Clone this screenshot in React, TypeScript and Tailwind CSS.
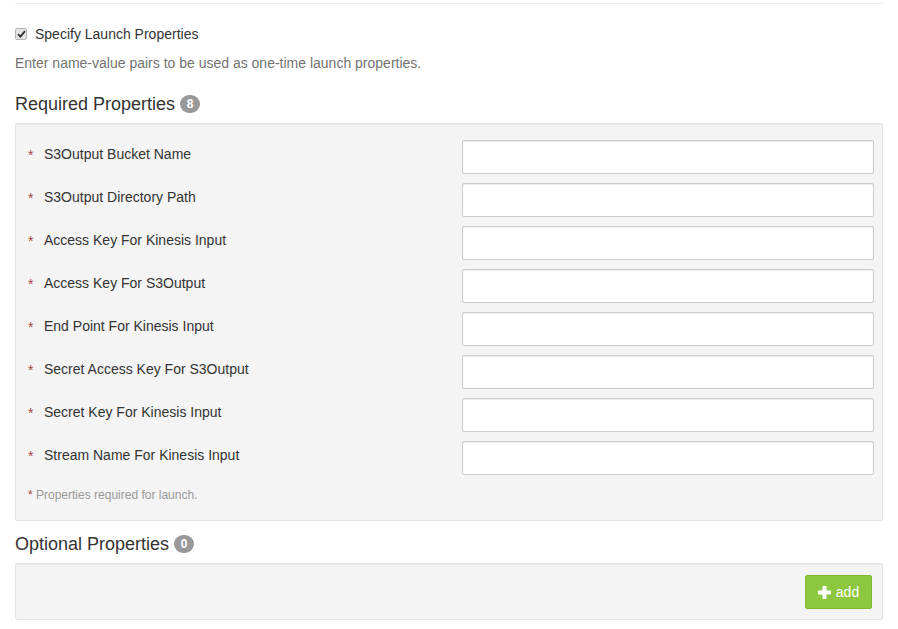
const requiredProps: string[] = [
  "S3Output Bucket Name",
  "S3Output Directory Path",
  "Access Key For Kinesis Input",
  "Access Key For S3Output",
  "End Point For Kinesis Input",
  "Secret Access Key For S3Output",
  "Secret Key For Kinesis Input",
  "Stream Name For Kinesis Input",
];

const Badge = ({ count }: { count: number }) => (
  <span className="ml-[5px] inline-flex h-[18px] min-w-[20px] items-center justify-center rounded-full bg-[#999] px-[6px] text-[12px] font-bold leading-none text-white">
    {count}
  </span>
);

const App = () => {
  return (
    <div className="min-h-screen bg-white font-['Liberation_Sans',Arial,sans-serif] text-[14px] text-[#333]">
      <div className="px-[15px] pt-[3px]">
        <div className="border-t border-[#eee]" />

        <label className="mt-[20px] flex h-[20px] items-center">
          <span className="flex h-[12px] w-[12px] items-center justify-center rounded-[2px] border border-[#b5b5b5] bg-[#e4e4e4]">
            <svg width="9" height="8" viewBox="0 0 9 8">
              <path
                d="M1 4.2 L3.4 6.6 L8 1.2"
                fill="none"
                stroke="#333"
                strokeWidth="1.8"
              />
            </svg>
          </span>
          <span className="ml-[8px]">Specify Launch Properties</span>
        </label>

        <p className="mt-[9px] leading-[20px] text-[#737373]">
          Enter name-value pairs to be used as one-time launch properties.
        </p>

        <h4 className="mt-[20px] flex h-[22px] items-center text-[18px] leading-[22px]">
          Required Properties
          <Badge count={8} />
        </h4>

        <div className="mt-[8px] rounded-[2px] border border-[#e3e3e3] bg-[#f4f4f4] pb-[16px] pl-[12px] pr-[8px] pt-[16px] shadow-[inset_0_1px_1px_rgba(0,0,0,0.05)]">
          <div className="flex flex-col gap-[9px]">
            {requiredProps.map((name) => (
              <div key={name} className="flex items-start">
                <div className="flex h-[34px] flex-1 items-center pb-[5px]">
                  <span className="w-[16px] pt-[2px] text-[#a94442]">*</span>
                  <span>{name}</span>
                </div>
                <input
                  type="text"
                  className="h-[34px] w-[412px] rounded-[2px] border border-[#ccc] bg-white px-[12px] shadow-[inset_0_1px_1px_rgba(0,0,0,0.075)] outline-none"
                />
              </div>
            ))}
          </div>
          <p className="mt-[12px] text-[12px] leading-[17px] text-[#999]">
            <span className="text-[#a94442]">*</span> Properties required for
            launch.
          </p>
        </div>

        <h4 className="mt-[12px] flex h-[22px] items-center text-[18px] leading-[22px]">
          Optional Properties
          <Badge count={0} />
        </h4>

        <div className="mt-[8px] flex justify-end rounded-[2px] border border-[#e3e3e3] bg-[#f4f4f4] pb-[10px] pr-[10px] pt-[11px] shadow-[inset_0_1px_1px_rgba(0,0,0,0.05)]">
          <button className="flex h-[34px] w-[67px] items-center justify-center gap-[5px] rounded-[2px] border border-[#7fb530] bg-[#8dc63f] text-[14px] text-white">
            <svg width="13" height="13" viewBox="0 0 13 13" fill="white">
              <rect x="4.5" y="0" width="4" height="13" rx="0.5" />
              <rect x="0" y="4.5" width="13" height="4" rx="0.5" />
            </svg>
            add
          </button>
        </div>
      </div>
    </div>
  );
};

export default App;
